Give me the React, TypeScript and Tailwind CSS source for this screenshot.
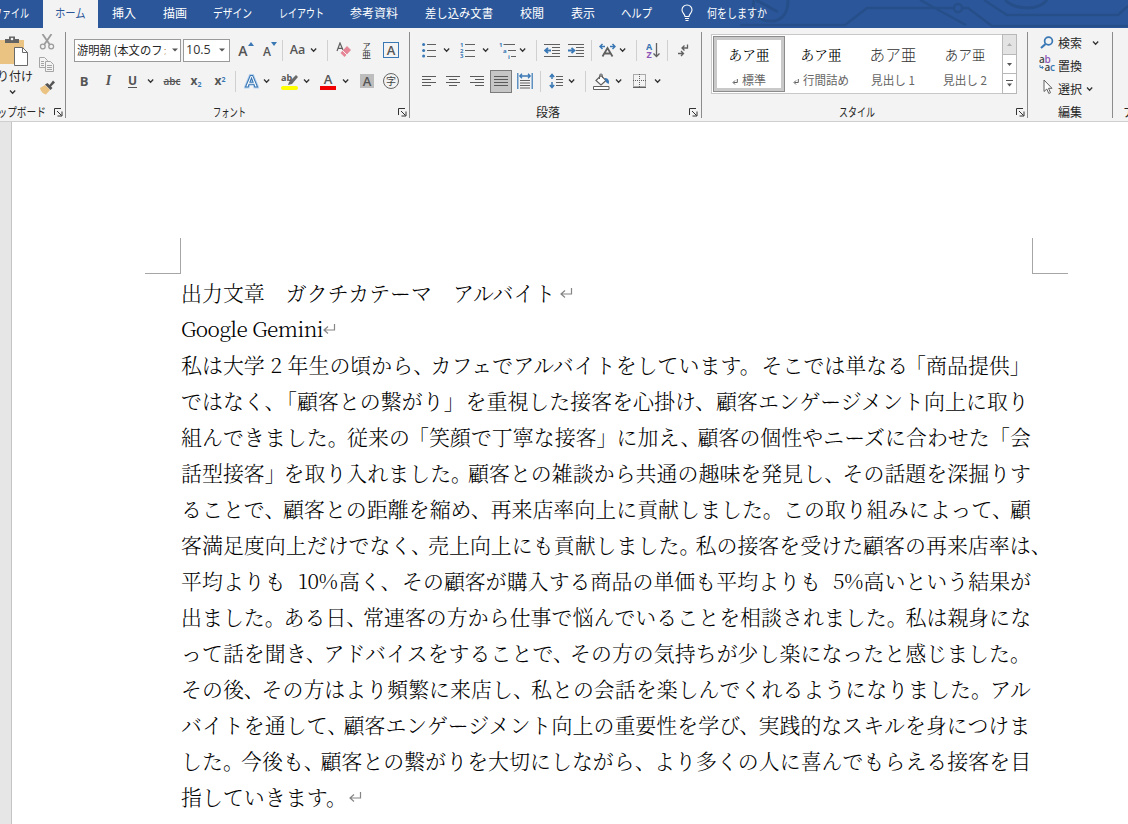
import type { ReactNode } from "react";

type Item = { c: number; w: number; el: ReactNode };

/** Row of tools; each entry gives its centre and width, the gaps follow from those. */
function Track({ from, items, className = "" }: { from: number; items: Item[]; className?: string }) {
  let cursor = from;
  return (
    <div className={`flex items-center ${className}`}>
      {items.map((it, i) => {
        const ml = it.c - it.w / 2 - cursor;
        cursor = it.c + it.w / 2;
        return (
          <div key={i} className="flex shrink-0 items-center justify-center" style={{ marginLeft: ml, width: it.w }}>
            {it.el}
          </div>
        );
      })}
    </div>
  );
}

/** Text condensed to a given width, like a UI font with narrow kana. */
function Fit({ t, w, em, size = 12, className = "" }: { t: string; w: number; em?: number; size?: number; className?: string }) {
  const n = em ?? t.length;
  return (
    <span className="inline-block shrink-0 overflow-visible whitespace-nowrap" style={{ width: w }}>
      <span
        className={`inline-block origin-left whitespace-nowrap ${className}`}
        style={{ fontSize: size, transform: `scaleX(${w / (n * size)})` }}
      >
        {t}
      </span>
    </span>
  );
}

function Ic({ w, h, children }: { w: number; h: number; children: ReactNode }) {
  return (
    <svg width={w} height={h} viewBox={`0 0 ${w} ${h}`} fill="none" stroke="#606060" strokeWidth="1" className="shrink-0">
      {children}
    </svg>
  );
}

const BLUE = "#3a78b5";
const Chev = () => (
  <Ic w={8} h={6}>
    <path d="M1 1.500 3.600 4.200 6.200 1.500" stroke="#333" strokeWidth="1.300" />
  </Ic>
);
const Sep = () => <div className="h-[21px] w-px bg-[#d0d0d0]" />;
const Divider = () => <div className="mt-1 h-[86px] w-px shrink-0 bg-[#8c8c8c]" />;
const Launcher = () => (
  <Ic w={9} h={9}>
    <path d="M.5 7V.5H7M3 3l4.500 4.500M8 3.500V8H3.500" stroke="#333" />
  </Ic>
);
const Lines = ({ rows }: { rows: [number, number][] }) => (
  <Ic w={16} h={10}>
    {rows.map(([a, b], i) => (
      <path key={i} d={`M${a} ${i * 3 + 0.5}H${b}`} stroke="#5a5a5a" />
    ))}
  </Ic>
);

function Group({ w, label, lw, lx, launcher, children }: { w: number; label: string; lw: number; lx: number; launcher?: number; children: ReactNode }) {
  return (
    <div className="flex h-full shrink-0 flex-col" style={{ width: w }}>
      <div className="h-[76px]">{children}</div>
      <Track
        from={0}
        className="h-[17px]"
        items={[
          { c: lx, w: lw, el: <div className="-mt-0.5 flex"><Fit t={label} w={lw} /></div> },
          ...(launcher ? [{ c: launcher, w: 9, el: <Launcher /> }] : []),
        ]}
      />
    </div>
  );
}

const tabs: [string, number, number][] = [
  ["挿入", 112, 24],
  ["描画", 163, 24],
  ["デザイン", 213, 39],
  ["レイアウト", 279, 45],
  ["参考資料", 350, 48],
  ["差し込み文書", 425, 68],
  ["校閲", 520, 24],
  ["表示", 571, 24],
  ["ヘルプ", 621, 31],
];

function TabBar() {
  return (
    <div className="relative flex h-7 items-center overflow-hidden bg-[#2b579a] text-white">
      <svg className="absolute left-[700px] top-0" width="428" height="28" fill="none" stroke="#264f8a" strokeWidth="2.5">
        <path d="M40 25H145L167 8H252L268 8 292 26H428M220 0 266 25M284 0 307 15H418L428 6" />
        <circle cx="258" cy="8" r="4" fill="#2b579a" />
        <path d="M56 0 78 12M54 0C50 16 62 22 74 21 84 19 88 12 88 0M305 0C315 10 338 11 347 0" strokeWidth="3" />
      </svg>
      <div className="flex h-full w-[43px] shrink-0 items-center overflow-hidden pb-0.5">
        <div className="-ml-[7px] flex">
          <Fit t="ファイル" w={36} />
        </div>
      </div>
      <div className="flex h-full w-[55px] shrink-0 items-center justify-center bg-[#f3f3f3] pb-0.5 text-[#2b579a]">
        <Fit t="ホーム" w={31} />
      </div>
      <Track
        from={98}
        className="relative pb-0.5"
        items={[
          ...tabs.map(([t, x, w]) => ({ c: x + w / 2, w, el: <Fit t={t} w={w} /> })),
          {
            c: 687,
            w: 12,
            el: (
              <Ic w={12} h={18}>
                <path d="M4 12.5C4 10 1 9 1 6a5 5 0 0 1 10 0c0 3-3 4-3 6.500zM4 14.500h4M4.500 16.500h3" stroke="#fff" strokeWidth="1.1" />
              </Ic>
            ),
          },
          { c: 736.5, w: 60, el: <Fit t="何をしますか" w={60} /> },
        ]}
      />
    </div>
  );
}

function Clipboard() {
  return (
    <Group w={65} label="クリップボード" lw={68} lx={12} launcher={58}>
      <div className="flex">
        <div className="flex w-[33px] flex-col items-start">
          <div className="mt-[7px] h-8">
            <Ic w={30} h={32}>
              <path d="M0 5H24V29H0z" fill="#eac282" stroke="none" />
              <path d="M5 8V4h4V1.500h6V4h4V8z" fill="#636363" stroke="none" />
              <circle cx="12" cy="4" r="1.300" fill="#f3f3f3" stroke="none" />
              <path d="M14.500 12.500h8l5 5V30.500h-13z" fill="#fff" stroke="#6a6a6a" />
              <path d="M22.500 12.500v5h5" stroke="#6a6a6a" />
            </Ic>
          </div>
          <div className="-ml-[15px] flex h-[18px] items-center">
            <Fit t="貼り付け" w={48} />
          </div>
          <div className="ml-[9px] flex">
            <div className="mt-[4px]"><Chev /></div>
          </div>
        </div>
        <div className="ml-[5px] flex w-[18px] flex-col items-center">
          <div className="mt-[6px] h-[23px]">
            <Ic w={16} h={16}>
              <path d="M3.500 0 11 11M12.500 0 5 11" stroke="#9b9b9b" strokeWidth="1.800" />
              <circle cx="3.800" cy="12.500" r="2.400" stroke="#9b9b9b" strokeWidth="1.300" />
              <circle cx="12.200" cy="12.500" r="2.400" stroke="#9b9b9b" strokeWidth="1.300" />
            </Ic>
          </div>
          <div className="h-[23px]">
            <Ic w={16} h={15}>
              <path d="M.5.5h5l3 3v7h-8zM2 4.500h3M2 6.500h3M2 8.500h3" stroke="#a5a5a5" />
              <path d="M6.500 4.500h5l3 3v7h-8z" fill="#f3f3f3" stroke="#a5a5a5" />
              <path d="M8 8.500h5M8 10.500h5M8 12.500h5" stroke="#a5a5a5" />
            </Ic>
          </div>
          <Ic w={16} h={15}>
            <path d="M1 8 6 5l5 5-4 4.500C4 14 2 12 1 8z" fill="#eac282" stroke="none" />
            <path d="M6 4.500 8.500 3 10.500 5 14 .5 16 2.500 12 6.500 13.500 8 11.500 10z" fill="#555" stroke="none" />
          </Ic>
        </div>
      </div>
    </Group>
  );
}

function Combo({ w, children }: { w: number; children: ReactNode }) {
  return (
    <div className="flex h-[23px] items-center justify-between overflow-hidden border border-[#9a9a9a] bg-white pl-[2px] pr-1" style={{ width: w }}>
      {children}
      <Ic w={6} h={4}>
        <path d="M0 .5h6L3 3.500z" fill="#555" stroke="none" />
      </Ic>
    </div>
  );
}

const G = "text-[#555] leading-none font-['Open_Sans',sans-serif]";

function FontGroup() {
  return (
    <Group w={344} label="フォント" lw={33} lx={163} launcher={336}>
      <Track
        from={66}
        className="h-[44px]"
        items={[
          { c: 127.5, w: 107, el: <Combo w={107}><Fit t="游明朝 (本文のフォ" w={95} em={8.4} className="[clip-path:inset(0_9px_0_0)]" /></Combo> },
          { c: 206.5, w: 47, el: <Combo w={47}><span className="font-['Open_Sans',sans-serif] text-[12.5px] text-[#333]">10.5</span></Combo> },
          { c: 243, w: 14, el: <span className={`${G} relative pt-0.5 text-[14px] font-semibold`}>A<svg className="absolute -right-1.5 top-0" width="6" height="4"><path d="M0 4 3 0 6 4z" fill={BLUE} /></svg></span> },
          { c: 267, w: 12, el: <span className={`${G} relative pt-1 text-[12px] font-semibold`}>A<svg className="absolute -right-1.5 top-0" width="6" height="4"><path d="M0 0 3 4 6 0z" fill={BLUE} /></svg></span> },
          { c: 282.5, w: 1, el: <Sep /> },
          { c: 297.5, w: 17, el: <span className={`${G} text-[12.5px] font-semibold`}>Aa</span> },
          { c: 313.5, w: 8, el: <Chev /> },
          { c: 327.5, w: 1, el: <Sep /> },
          {
            c: 343.5, w: 15, el: (
              <Ic w={15} h={16}>
                <path d="M1 9 4 1 7 8M2.200 6.300h4" strokeWidth="1.200" />
                <path d="M4.500 11 11 4l4 4L8.500 15z" fill="#e58595" stroke="none" />
                <path d="M6.500 8.500 11 13" stroke="#f3f3f3" />
              </Ic>
            ),
          },
          { c: 366.5, w: 12, el: <span className="flex flex-col items-center leading-none text-[#333]"><span className="h-[8px] text-[8px] leading-[8px]">ア</span><span className="h-[9px] text-[9px] leading-[9px]">亜</span></span> },
          { c: 391, w: 16, el: <span className={`${G} flex h-4 w-4 items-center justify-center border border-[#3a78b5] text-[13px] font-semibold`}>A</span> },
        ]}
      />
      <Track
        from={66}
        className="-mt-[1px] h-5"
        items={[
          { c: 84, w: 10, el: <span className={`${G} text-[13px] font-bold`}>B</span> },
          { c: 108.5, w: 10, el: <span className="font-['Liberation_Serif',serif] text-[14px] font-bold italic leading-none text-[#555]">I</span> },
          { c: 132.5, w: 10, el: <span className={`${G} border-b border-[#555] text-[12px] font-bold leading-[11px]`}>U</span> },
          { c: 150.5, w: 8, el: <Chev /> },
          { c: 172, w: 17, el: <span className={`${G} text-[10px] font-semibold line-through`}>abc</span> },
          { c: 196, w: 14, el: <span className={`${G} whitespace-nowrap text-[12px] font-bold`}>x<sub className="text-[7px] text-[#3a78b5]">2</sub></span> },
          { c: 220, w: 14, el: <span className={`${G} whitespace-nowrap text-[12px] font-bold`}>x<sup className="text-[7px] text-[#3a78b5]">2</sup></span> },
          { c: 235.5, w: 1, el: <Sep /> },
          { c: 251, w: 14, el: <Ic w={15} h={15}><path d="M1.500 13 6.300 1.500H8.700L13.500 13H10.800L9.900 10.300H5.100L4.200 13zM5.900 8.200H9.100L7.500 4z" fill="#fff" stroke="#b7d2ee" strokeWidth="3" /><path d="M1.500 13 6.300 1.500H8.700L13.500 13H10.800L9.900 10.300H5.100L4.200 13zM5.900 8.200H9.100L7.500 4z" fill="#fff" stroke={BLUE} strokeWidth="1.100" /></Ic> },
          { c: 266.5, w: 8, el: <Chev /> },
          {
            c: 289.5, w: 17, el: (
              <span className="relative flex h-[17px] w-[17px] flex-col justify-end">
                <span className={`${G} absolute left-0 top-0 text-[9px] font-bold`}>ab</span>
                <svg className="absolute left-[7px] top-0.5" width="10" height="11"><path d="M0 10 1 7 8 0 10 2 4 9z" fill="#6a6a6a" /></svg>
                <span className="h-1 w-full rounded-sm bg-[#ffff00]" />
              </span>
            ),
          },
          { c: 306.5, w: 8, el: <Chev /> },
          { c: 328, w: 16, el: <span className={`${G} flex h-4 w-4 flex-col items-center text-[13px] font-semibold leading-[12px]`}>A<span className="h-1 w-full shrink-0 bg-[#f00000]" /></span> },
          { c: 345.5, w: 8, el: <Chev /> },
          { c: 367, w: 14, el: <span className={`${G} flex h-3.5 w-3.5 items-center justify-center bg-[#bdbdbd] text-[13px] font-semibold`}>A</span> },
          { c: 391, w: 16, el: <span className="flex h-4 w-4 items-center justify-center rounded-full border border-[#666] text-[10px] leading-none text-[#444]">字</span> },
        ]}
      />
    </Group>
  );
}

const N = "font-['Open_Sans',sans-serif]";

function Paragraph() {
  return (
    <Group w={291} label="段落" lw={24} lx={138} launcher={283.5}>
      <Track
        from={410}
        className="h-[44px]"
        items={[
          { c: 428.5, w: 14, el: <Ic w={14} h={16}><path d="M5 2.500h9M5 8.500h9M5 14.500h9" /><g fill={BLUE} stroke="none"><circle cx="1.600" cy="2.500" r="1.500" /><circle cx="1.600" cy="8.500" r="1.500" /><circle cx="1.600" cy="14" r="1.500" /></g></Ic> },
          { c: 446.5, w: 8, el: <Chev /> },
          { c: 467.5, w: 15, el: <Ic w={15} h={16}><path d="M5 2.500h10M5 8.500h10M5 14.500h10" /><g fill={BLUE} stroke="none" className={`${N} text-[6px] font-bold`}><text x="0" y="5">1</text><text x="0" y="10.500">2</text><text x="0" y="16">3</text></g></Ic> },
          { c: 485.5, w: 8, el: <Chev /> },
          { c: 507.5, w: 17, el: <Ic w={17} h={17}><path d="M4.500 2.500H16M9 8.500h8M12 14.500h5" /><g fill={BLUE} stroke="none" className={`${N} text-[6px] font-bold`}><text x="0" y="5">1</text><text x="4" y="11">a</text><text x="9" y="17">i</text></g></Ic> },
          { c: 522.5, w: 8, el: <Chev /> },
          { c: 536.5, w: 1, el: <Sep /> },
          { c: 552, w: 16, el: <Ic w={16} h={13}><path d="M0 .5h16M8 3.500h8M8 6.500h8M8 9.500h8M0 12.500h16" /><path d="M7 6.500H2M4 3.800 1 6.500 4 9.200" stroke={BLUE} strokeWidth="1.800" /></Ic> },
          { c: 576, w: 16, el: <Ic w={16} h={13}><path d="M0 .5h16M8 3.500h8M8 6.500h8M8 9.500h8M0 12.500h16" /><path d="M0 6.500H5M3.500 3.800 6.500 6.500 3.500 9.200" stroke={BLUE} strokeWidth="1.800" /></Ic> },
          { c: 591.5, w: 1, el: <Sep /> },
          { c: 607.5, w: 17, el: <Ic w={17} h={14}><path d="M3.500 13.500 8.500 5 13.500 13.500M5.500 10.500h6" strokeWidth="1.800" /><path d="M6 3.500H1M3.500 1 1 3.500 3.500 6M11 3.500h5M13.500 1 16 3.500 13.500 6" stroke={BLUE} strokeWidth="1.500" /></Ic> },
          { c: 622.5, w: 8, el: <Chev /> },
          { c: 636.5, w: 1, el: <Sep /> },
          { c: 652.5, w: 14, el: <Ic w={14} h={17}><g stroke="none" className={`${N} text-[9px] font-bold`}><text x="0" y="7.500" fill={BLUE}>A</text><text x="0.500" y="16" fill="#8d56b8">Z</text></g><path d="M10.500 1v13M7.500 11.500 10.500 14.500 13.500 11.500" strokeWidth="1.300" /></Ic> },
          { c: 667.5, w: 1, el: <Sep /> },
          { c: 683, w: 11, el: <Ic w={11} h={13}><path d="M9.500.5V4H4.500M6.500 1.500 4 4 6.500 6.500M0 9.500H5M3 7 5.500 9.500 3 12" strokeWidth="1.300" /></Ic> },
        ]}
      />
      <Track
        from={410}
        className="-mt-[1px] h-5"
        items={[
          { c: 430, w: 16, el: <Lines rows={[[0, 14], [0, 9], [0, 14], [0, 9]]} /> },
          { c: 454, w: 16, el: <Lines rows={[[0, 14], [3, 11], [0, 14], [3, 11]]} /> },
          { c: 478, w: 16, el: <Lines rows={[[0, 14], [5, 14], [0, 14], [5, 14]]} /> },
          { c: 501, w: 22, el: <div className="flex h-[23px] w-[22px] items-center justify-center border border-[#7c7c7c] bg-[#c6c6c6]"><Lines rows={[[1, 15], [1, 15], [1, 15], [1, 15]]} /></div> },
          { c: 525, w: 16, el: <Ic w={16} h={16}><path d="M.8 0v16M15.200 0v16" stroke={BLUE} strokeWidth="1.200" /><path d="M3 3h10M5 .8 2.800 3 5 5.200M11 .8 13.200 3 11 5.200" stroke={BLUE} strokeWidth="1.300" /><path d="M3 7.500h10M3 10h10M3 12.500h10M3 15h10" /></Ic> },
          { c: 540.5, w: 1, el: <Sep /> },
          { c: 556, w: 14, el: <Ic w={14} h={16}><path d="M3 1v5M.8 4 3 1.500 5.200 4M3 9v6M.8 12 3 14.500 5.200 12" stroke={BLUE} strokeWidth="1.500" /><path d="M7 3.500h7M7 6.500h7M7 9.500h7M7 12.500h7" /></Ic> },
          { c: 571.5, w: 8, el: <Chev /> },
          { c: 585.5, w: 1, el: <Sep /> },
          { c: 601, w: 17, el: <Ic w={17} h={17}><path d="M3 7.500 8 2.500 13 7.500 8 12z" fill="#fff" strokeWidth="1.200" /><path d="M6.500 6V2.500a1.500 1.500 0 0 1 3 0V5" /><path d="M11.500 5C15 4.500 17 8 15.500 11L12.800 9z" fill={BLUE} stroke="none" /><path d="M.5 13.500h15.500v3H.5z" fill="#fff" /></Ic> },
          { c: 618.5, w: 8, el: <Chev /> },
          { c: 639.5, w: 13, el: <Ic w={13} h={14}><path d="M.5.5h12v12H.5zM6.500 0v13M0 6.500h13" strokeDasharray="1 1" /><path d="M0 13.500h13" /></Ic> },
          { c: 657.5, w: 8, el: <Chev /> },
        ]}
      />
    </Group>
  );
}

const styles: [string, number, number, boolean, string][] = [
  ["標準", 24, 13.7, true, "text-black"],
  ["行間詰め", 46, 13.7, true, "text-black"],
  ["見出し 1", 44, 15.6, false, "font-light text-[#333]"],
  ["見出し 2", 44, 13.7, false, "font-light text-[#222]"],
];

function Styles() {
  return (
    <Group w={325} label="スタイル" lw={36} lx={154.5} launcher={318}>
      <div className="flex pl-[9px] pt-[6px]">
        <div className="flex h-[60px] w-[291px] border border-r-0 border-[#c8c8c8] bg-white pl-px pt-px">
          {styles.map(([t, w, size, mark, cls], i) => (
            <div key={t} className={`flex h-[56px] w-[72px] shrink-0 flex-col items-center ${i === 0 ? "shadow-[inset_0_0_0_1px_#8c8c8c,inset_0_0_0_4px_#c9c9c9]" : ""}`}>
              <div className={`mt-[7px] flex h-[24px] items-center leading-none ${i < 2 ? "font-['Noto_Serif_CJK_JP','Noto_Sans_CJK_JP',serif]" : ""} ${cls}`} style={{ fontSize: size }}>
                あア亜
              </div>
              <div className="mt-[4px] flex h-[18px] items-center text-[#666]">
                {mark && (
                  <span className="mr-1 mt-1 flex">
                    <Ic w={6} h={6}><path d="M5.300 0v3.500H1.500M3 1.500 1 3.500 3 5.500" /></Ic>
                  </span>
                )}
                <Fit t={t} w={w} em={i > 1 ? 3.78 : undefined} />
              </div>
            </div>
          ))}
        </div>
        <div className="flex h-[60px] w-[15px] flex-col border border-[#b8b8b8] bg-white">
          <div className="flex h-[20px] items-center justify-center border-b border-[#b8b8b8] bg-[#e3e3e3]">
            <Ic w={5} h={3}><path d="M0 3 2.500 0 5 3z" fill="#b0b0b0" stroke="none" /></Ic>
          </div>
          <div className="flex h-[19px] items-center justify-center border-b border-[#b8b8b8]">
            <Ic w={5} h={3}><path d="M0 0 2.500 3 5 0z" fill="#555" stroke="none" /></Ic>
          </div>
          <div className="flex h-[19px] items-center justify-center">
            <Ic w={7} h={7}><path d="M0 .5h7" stroke="#555" /><path d="M1 3.500 3.500 6.500 6 3.500z" fill="#555" stroke="none" /></Ic>
          </div>
        </div>
      </div>
    </Group>
  );
}

function Editing() {
  return (
    <Group w={84} label="編集" lw={24} lx={42}>
      <div className="flex flex-col pt-[3px]">
        <Track from={1028} className="h-[23px]" items={[
          { c: 1046.5, w: 14, el: <Ic w={14} h={13}><circle cx="8.500" cy="5" r="3.900" stroke={BLUE} strokeWidth="1.700" /><path d="M5.500 8 1 12" stroke={BLUE} strokeWidth="2.200" /></Ic> },
          { c: 1070, w: 24, el: <Fit t="検索" w={24} /> },
          { c: 1095.5, w: 8, el: <Chev /> },
        ]} />
        <Track from={1028} className="h-[23px]" items={[
          { c: 1047, w: 17, el: <div className="-mt-1 flex"><Ic w={17} h={17}><g stroke="none" className={`${N} text-[10px] font-semibold`}><text x="0" y="8" fill="#444">a</text><text x="5.500" y="8" fill="#8d56b8">b</text><text x="5.500" y="15.500" fill="#444">a</text><text x="11" y="15.500" fill={BLUE}>c</text></g><path d="M1 10v2.500H4M2.800 11 4.300 12.500 2.800 14" stroke={BLUE} /></Ic></div> },
          { c: 1070, w: 24, el: <Fit t="置換" w={24} /> },
        ]} />
        <Track from={1028} className="h-[23px]" items={[
          { c: 1047.5, w: 10, el: <div className="-mt-1 flex"><Ic w={10} h={16}><path d="M1 1V12.500L3.800 10 5.800 14.500 7.500 13.700 5.500 9.300H9z" fill="#fff" /></Ic></div> },
          { c: 1070, w: 24, el: <Fit t="選択" w={24} /> },
          { c: 1089.5, w: 8, el: <Chev /> },
        ]} />
      </div>
    </Group>
  );
}

/** Each line is a list of runs with the x where the run starts. */
type Run = [number, string];
const body: Run[][] = [
  [[181, "出力文章　ガクチカテーマ　アルバイト"], [558.5, "↵"]],
  [[181, "Google Gemini"], [321.5, "↵"]],
  [[181, "私は大学"], [270.5, "2"], [287.5, "年生の頃から、"], [430.5, "カフェでアルバイトをしています。"], [761.5, "そこでは単なる"], [915.5, "「商品提供」"]],
  [[181, "ではなく、"], [286.5, "「顧客との繋がり」"], [465.5, "を重視した接客を心掛け、"], [716, "顧客エンゲージメント向上に取り"]],
  [[181, "組んできました。"], [347, "従来の"], [418.5, "「笑顔で丁寧な接客」"], [616.5, "に加え、"], [697.5, "顧客の個性やニーズに合わせた"], [999.5, "「会"]],
  [[181, "話型接客」"], [283.5, "を取り入れました。"], [468, "顧客との雑談から共通の趣味を発見し、"], [842.5, "その話題を深掘りす"]],
  [[181, "ることで、"], [283, "顧客との距離を縮め、"], [490.5, "再来店率向上に貢献しました。"], [783, "この取り組みによって、"], [1010, "顧"]],
  [[181, "客満足度向上だけでなく、"], [428, "売上向上にも貢献しました。"], [695.5, "私の接客を受けた顧客の再来店率は、"]],
  [[181, "平均よりも"], [298, "10%"], [339, "高く、"], [402, "その顧客が購入する商品の単価も平均よりも"], [833, "5%"], [863.5, "高いという結果が"]],
  [[181, "出ました。"], [283.5, "ある日、"], [363, "常連客の方から仕事で悩んでいることを相談されました。"], [905.5, "私は親身にな"]],
  [[181, "って話を聞き、"], [323.5, "アドバイスをすることで、"], [570, "その方の気持ちが少し楽になったと感じました。"]],
  [[181, "その後、"], [261.5, "その方はより頻繁に来店し、"], [531, "私との会話を楽しんでくれるようになりました。"], [990, "アル"]],
  [[181, "バイトを通して、"], [343.5, "顧客エンゲージメント向上の重要性を学び、"], [758.5, "実践的なスキルを身につけま"]],
  [[181, "した。"], [241, "今後も、"], [320.5, "顧客との繋がりを大切にしながら、"], [654, "より多くの人に喜んでもらえる接客を目"]],
  [[181, "指していきます。"], [348, "↵"]],
];

const ReturnMark = () => (
  <span className="mt-[2px] block">
    <Ic w={14} h={12}>
      <path d="M12.500 1V7H2.500M6 3.500 2 7l4 3.500" stroke="#858585" strokeWidth="1.200" />
    </Ic>
  </span>
);

function Line({ runs }: { runs: Run[] }) {
  return (
    <div className="flex h-9 items-center whitespace-nowrap">
      {runs.map(([x, t], i) => {
        const next = runs[i + 1]?.[0] ?? 1060;
        return (
          <span
            key={i}
            className={`shrink-0 overflow-visible ${t.startsWith("Google") ? "tracking-[-0.55px]" : t.endsWith("%") ? "tracking-[-0.3px]" : "tracking-[0.06px]"}`}
            style={{ width: next - x }}
          >
            {t === "↵" ? <ReturnMark /> : t}
          </span>
        );
      })}
    </div>
  );
}

export default function App() {
  return (
    <div lang="ja" className="flex h-[824px] w-[1128px] flex-col overflow-hidden bg-white font-['Noto_Sans_CJK_JP',sans-serif] text-[12px] text-[#262626]">
      <TabBar />
      <div className="flex h-[94px] shrink-0 overflow-hidden border-b border-[#cfcfcf] bg-[#f3f3f3]">
        <Clipboard />
        <Divider />
        <FontGroup />
        <div className="-ml-px flex"><Divider /></div>
        <Paragraph />
        <Divider />
        <Styles />
        <Divider />
        <Editing />
        <Divider />
        <div className="flex w-[15px] flex-col justify-end overflow-hidden pl-[10px]">
          <div className="h-[18px]">ア</div>
        </div>
      </div>
      <div className="flex flex-1">
        <div className="w-3 shrink-0 border-r border-[#c4c4c4] bg-[#e6e6e6]" />
        <div className="flex flex-1 flex-col">
          <div className="flex justify-between pl-[133px] pr-[60px] pt-[116px]">
            <div className="h-9 w-9 border-b border-r border-[#a6a6a6]" />
            <div className="h-9 w-9 border-b border-l border-[#a6a6a6]" />
          </div>
          <div className="flex flex-col pl-[169px] font-['Noto_Serif_CJK_JP','Noto_Sans_CJK_JP',serif] text-[20.9px] font-light leading-9 text-black [font-feature-settings:'halt']">
            {body.map((runs, i) => (
              <Line key={i} runs={runs} />
            ))}
          </div>
        </div>
      </div>
    </div>
  );
}
